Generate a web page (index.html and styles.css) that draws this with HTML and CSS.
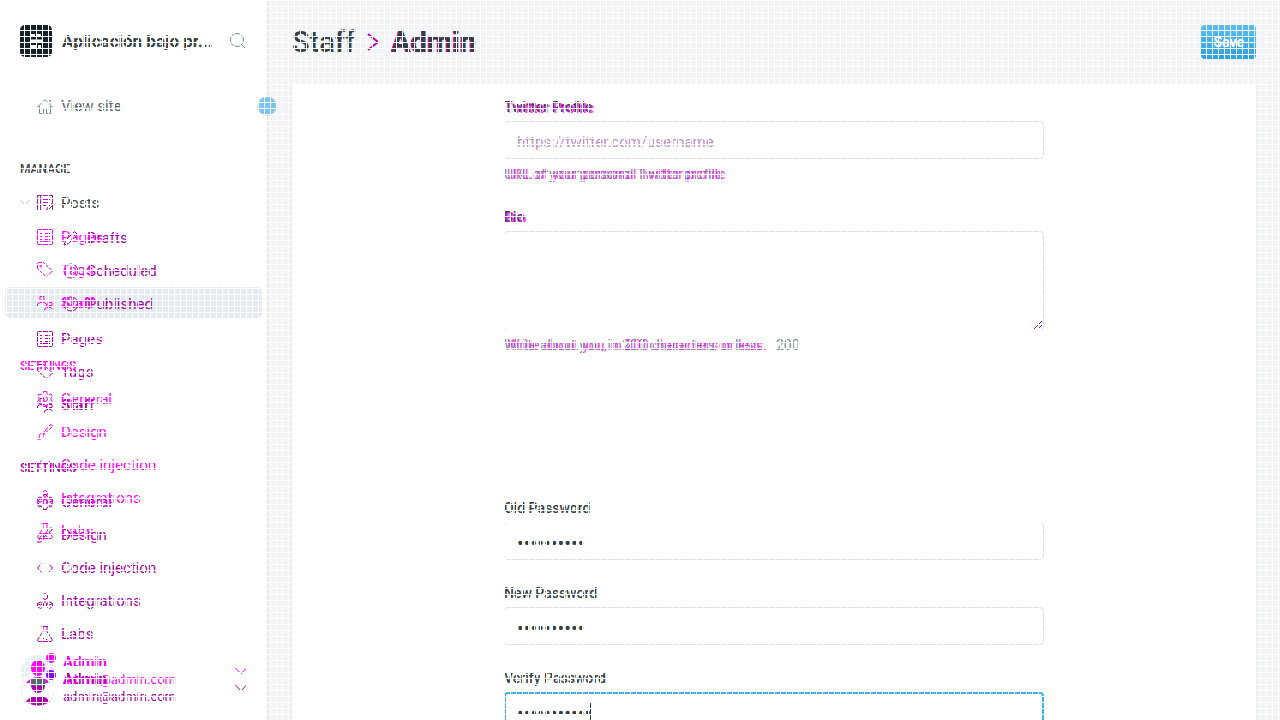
FILE: index.html
```html
<!DOCTYPE html>
<html lang="es">
<head>
<meta charset="utf-8">
<title>Staff - Admin</title>
<link rel="stylesheet" href="styles.css">
</head>
<body>
<svg class="defs" aria-hidden="true">
  <symbol id="home" viewBox="0 0 16 16"><path d="M.5 9 8 1.500 15.500 9M2.500 8v7.500h4v-5h3v5h4V8M11.500 2.500h2v3"/></symbol>
  <symbol id="posts" viewBox="0 0 16 16"><path d="M15.500 8V.5H.5v15h8M3.500.5v15M6 4.500h7M6 7.500h5M6 10.500h3M9.500 15.500l1-3 4-4 1.500 1.500-4 4z"/><path d="M.5.5h15v15H.5z"/></symbol>
  <symbol id="pages" viewBox="0 0 16 16"><rect x=".5" y=".5" width="15" height="15" rx="1"/><path d="M3 4.500h3M8 4.500h5M3 7.500h3M8 7.500h5M3 10.500h3M8 10.500h5M3 12.500h10"/></symbol>
  <symbol id="tag" viewBox="0 0 16 16"><path d="M.5 1.500v5l9 8.500 6-6-9-8.500h-5z"/><circle cx="4" cy="4" r="1"/></symbol>
  <symbol id="staff" viewBox="0 0 16 16"><path d="M3 1.500h4v4H3zM.5 11V9l2.500-1.500h4L9.500 9v3M11 7.500h4v3h-4zM7.500 15.500V14l2.500-1.500h3.500l2 1.500"/></symbol>
  <symbol id="pen" viewBox="0 0 16 16"><path d="m1 15 1.500-4.500 9-9 3 3-9 9zM9.500 3.500l3 3"/></symbol>
  <symbol id="clock" viewBox="0 0 16 16"><circle cx="8" cy="8" r="7"/><path d="M8 3.500V8l3 2"/></symbol>
  <symbol id="check" viewBox="0 0 16 16"><circle cx="8" cy="8" r="7"/><path d="m4.500 8 2.500 2.500 4.500-5"/></symbol>
  <symbol id="gear" viewBox="0 0 16 16"><circle cx="8" cy="8" r="2.500"/><path d="m6.500.5-.5 2-2 1-2-.5-1.500 2.500L2 7v2L.5 10.500 2 13l2-.5 2 1 .5 2h3l.5-2 2-1 2 .5 1.500-2.500L14 9V7l1.500-1.500L14 3l-2 .5-2-1-.5-2z"/></symbol>
  <symbol id="brush" viewBox="0 0 16 16"><path d="m6 9 7-8h2v2l-8 7zM6 9c-2-.5-3.500 1-3.500 3 0 1.500-1 3-2 3 3 1 6-1 6.500-5"/></symbol>
  <symbol id="code" viewBox="0 0 16 16"><path d="M4.500 3.500.5 8l4 4.500M11.500 3.500l4 4.500-4 4.500"/></symbol>
  <symbol id="blocks" viewBox="0 0 16 16"><path d="m8 .5 2.500 1.500v3L8 6.500 5.500 5V2zM3.500 9 6.500 10.500v3l-3 2-3-2v-3zM12.500 9l3 1.500v3l-3 2-3-2v-3zM8 6.500V10M.5 10.500l3 1.500 3-1.500M9.500 10.500l3 1.500 3-1.500"/></symbol>
  <symbol id="flask" viewBox="0 0 16 16"><path d="M4.500.5h7M6 .5v5l-5 7.500c-.8 1.500 0 2.500 1 2.500h12c1 0 1.800-1 1-2.500l-5-7.500v-5M3 10.500h10M6 12.500h1M9 13.500h1"/></symbol>
  <symbol id="down" viewBox="0 0 12 8"><path d="m.5 1 5.500 6L11.500 1"/></symbol>
</svg>

<div class="app">
  <aside class="sidebar">
    <header class="brand">
      <svg class="logo" viewBox="0 0 32 32" aria-hidden="true"><rect width="32" height="32" rx="5" fill="#15212a"/><path d="M10 10.500h5M16 10.500h5M10 16h12M10 21.500h6M18 21.500h3" stroke="#fff" stroke-width="3"/></svg>
      <span class="brand-name">Aplicación bajo pr...</span>
      <button class="plain" aria-label="Search"><svg class="icon" viewBox="0 0 16 16"><circle cx="7" cy="7" r="6.500"/><path d="m11.500 11.500 4 4"/></svg></button>
    </header>
    <nav class="nav">
      <a class="item view" href="#"><svg class="icon"><use href="#home"/></svg>View site</a>
      <h2 class="group first">Manage</h2>
      <a class="item" href="#"><svg class="twist"><use href="#down"/></svg><svg class="icon mixed"><use href="#posts"/></svg>Posts</a>
      <div class="sub">
        <a class="item changed" href="#"><svg class="icon"><use href="#pen"/></svg>Drafts</a>
        <a class="item changed" href="#"><svg class="icon"><use href="#clock"/></svg>Scheduled</a>
        <a class="item changed" href="#"><svg class="icon"><use href="#check"/></svg>Published</a>
      </div>
      <a class="item changed" href="#"><svg class="icon"><use href="#pages"/></svg>Pages</a>
      <a class="item changed" href="#"><svg class="icon"><use href="#tag"/></svg>Tags</a>
      <a class="item changed strong" href="#"><svg class="icon"><use href="#staff"/></svg>Staff</a>
      <h2 class="group changed">Settings</h2>
      <a class="item changed" href="#"><svg class="icon"><use href="#gear"/></svg>General</a>
      <a class="item changed" href="#"><svg class="icon"><use href="#brush"/></svg>Design</a>
      <a class="item changed" href="#"><svg class="icon"><use href="#code"/></svg>Code injection</a>
      <a class="item changed" href="#"><svg class="icon"><use href="#blocks"/></svg>Integrations</a>
      <a class="item changed" href="#"><svg class="icon"><use href="#flask"/></svg>Labs</a>
    </nav>
    <nav class="nav added" aria-label="Added">
      <a class="item" href="#"><svg class="icon"><use href="#pages"/></svg>Pages</a>
      <a class="item" href="#"><svg class="icon"><use href="#tag"/></svg>Tags</a>
      <a class="item strong active" href="#"><svg class="icon"><use href="#staff"/></svg>Staff</a>
      <h2 class="group">Settings</h2>
      <a class="item" href="#"><svg class="icon"><use href="#gear"/></svg>General</a>
      <a class="item" href="#"><svg class="icon"><use href="#brush"/></svg>Design</a>
      <a class="item" href="#"><svg class="icon"><use href="#code"/></svg>Code injection</a>
      <a class="item" href="#"><svg class="icon"><use href="#blocks"/></svg>Integrations</a>
      <a class="item" href="#"><svg class="icon"><use href="#flask"/></svg>Labs</a>
    </nav>
    <div class="account">
      <svg class="avatar" viewBox="0 0 38 54" aria-hidden="true"><circle cx="18" cy="19" r="17" fill="#e5eff5"/><circle cx="18" cy="36" r="16.500" fill="#fff" stroke="#e5eff5"/><path d="M1 36a17 17 0 0 1 34 0v-17H1z" fill="#e5eff5" clip-path="circle(17px at 17px 0px)"/><ellipse cx="18" cy="15" rx="7" ry="8" fill="#f0f"/><path d="M6 30q4-6 12-6t12 6z" fill="#f0f"/><ellipse cx="18" cy="32" rx="7" ry="8" fill="#b000b0"/><ellipse cx="18" cy="29" rx="8" ry="4" fill="#546a70"/><path d="M6 49q3-6 12-6t12 6q-12 7-24 0z" fill="#b000b0"/><circle cx="31" cy="5" r="5" fill="#f0f"/><circle cx="31" cy="22" r="5" fill="#9000ff"/></svg>
      <div class="people">
        <div class="person late"><strong>Admin</strong><span>admin@admin.com</span></div>
        <div class="person early"><strong>Admin</strong><span>admin@admin.com</span></div>
      </div>
      <div class="arrows"><svg class="arrow early"><use href="#down"/></svg><svg class="arrow"><use href="#down"/></svg></div>
    </div>
    <button class="handle" aria-label="Collapse menu"></button>
  </aside>

  <main class="main">
    <header class="top">
      <h1 class="title"><a href="#">Staff</a><svg class="sep" viewBox="0 0 12 18" aria-hidden="true"><path d="m1 1 10 8-10 8"/></svg><span class="name">Admin</span></h1>
      <button class="save">Save</button>
    </header>
    <section class="panel">
      <form class="form">
        <div class="field">
          <label class="double" data-text="Twitter Profile" for="twitter">Twitter Profile</label>
          <input id="twitter" placeholder="https://twitter.com/username">
          <p class="double" data-text="URL of your personal Twitter profile">URL of your personal Twitter profile</p>
        </div>
        <div class="field bio">
          <label class="double" data-text="Bio" for="bio">Bio</label>
          <div class="area"><textarea id="bio"></textarea><svg class="grip" viewBox="0 0 8 8" aria-hidden="true"><path d="M0 8l8-8M4 8l4-4"/></svg></div>
          <p class="count"><span class="double" data-text="Write about you, in 200 characters or less.">Write about you, in 200 characters or less.</span><span>200</span></p>
        </div>
        <div class="field"><label for="old">Old Password</label><input id="old" type="password" value="1234567890"></div>
        <div class="field"><label for="new">New Password</label><input id="new" type="password" value="1234567890"></div>
        <div class="field"><label for="verify">Verify Password</label><div class="area"><input id="verify" class="focused" type="password" value="12345678901"><i class="caret"></i></div></div>
      </form>
    </section>
  </main>
</div>
<div class="grid" aria-hidden="true"></div>
</body>
</html>
```

FILE: styles.css
```css
* { box-sizing: border-box; }
body { margin: 0; font: 15px/20px Roboto, sans-serif; color: #394047; background: #fff; }
h1, h2, p { margin: 0; }
a { color: inherit; text-decoration: none; }
.defs { position: absolute; width: 0; height: 0; }
.app { display: flex; height: 100vh; overflow: hidden; }
svg { fill: none; stroke: currentColor; flex: none; }
.logo, .avatar { stroke: none; }
.icon { width: 16px; height: 16px; color: #738a94; }
.changed, .changed .icon { color: #a800a8; }
.icon.mixed { color: #b018b8; }

.sidebar { position: relative; z-index: 1; flex: none; width: 267px; background: #fff; }
.brand { display: flex; align-items: center; gap: 10px; height: 82px; padding: 0 21px 0 20px; }
.logo { width: 32px; height: 32px; }
.brand-name { flex: 1; font-size: 17px; font-weight: 700; color: #343f44; white-space: nowrap; }
.plain { padding: 0; border: 0; background: none; line-height: 0; }
.nav { padding: 7px 5px 0; }
.item { position: relative; display: flex; align-items: center; gap: 8px; height: 33px; padding-left: 32px; }
.view { color: #566168; }
.twist { position: absolute; left: 15px; width: 10px; height: 7px; color: #b5babd; }
.strong { font-weight: 700; }
.group { margin: 41px 0 11px 15px; font-size: 12px; line-height: 12px; font-weight: 500; text-transform: uppercase; }
.sub { padding: 2px 0; }
.sub .item { padding-left: 58px; }
.added { position: absolute; top: 220px; left: 0; right: 0; padding-top: 0; color: #f0f; }
.added .icon { color: #f0f; }
.added .group { margin-bottom: 10px; }
.active::before { content: ""; position: absolute; inset: 1px 0; z-index: -1; border-radius: 5px; background: #e5eaf0; }
.account { position: absolute; left: 20px; right: 20px; top: 653px; display: flex; }
.avatar { width: 38px; height: 54px; }
.people { display: grid; flex: 1; margin-left: 5px; }
.person { grid-area: 1 / 1; display: flex; flex-direction: column; font-size: 15px; line-height: 18px; }
.person span { font-size: 13px; }
.early { color: #f0f; }
.late { padding-top: 17px; color: #a800a8; }
.arrows { display: flex; flex-direction: column; gap: 9px; padding-top: 14px; color: #a800a8; }
.arrow { width: 12px; height: 8px; }
.arrow.early { color: #f0f; }
.handle { position: absolute; top: 97px; right: -9px; width: 18px; height: 18px; padding: 0; border: 0; border-radius: 50%; background: #76c5f5; box-shadow: 0 0 0 1px #ccd0d3; }

.main { flex: 1; min-width: 0; display: flex; flex-direction: column; background: #f1f3f6; box-shadow: inset 3px 0 2px -2px #dfe2e6; }
.top { display: flex; flex: none; align-items: center; justify-content: space-between; height: 84px; padding: 0 24px 0 25px; }
.title { display: flex; align-items: center; font-size: 29px; line-height: 36px; font-weight: 500; color: #343f44; }
.sep { width: 12px; height: 18px; margin: 0 12px; color: #b800b8; stroke-width: 2; }
.name { font-weight: 700; text-shadow: -1px 0 #d000d0; }
.save { height: 34px; padding: 0 12px; border: 0; border-radius: 4px; background: linear-gradient(#5bbcf3, #2ba2e4); color: #fff; font: 700 14px/20px Roboto, sans-serif; }
.panel { flex: 1; min-height: 0; margin: 0 24px 0 25px; background: #fff; box-shadow: 0 0 3px #dfe2e6; clip-path: inset(0 -4px); }
.form { max-width: 540px; margin: 0 auto; padding-top: 13px; }
.field { margin-bottom: 23px; }
.field label, .field p { display: block; width: max-content; font-size: 14px; line-height: 20px; }
.field label { margin-bottom: 4px; font-weight: 500; color: #343f44; }
.field p { margin-top: 5px; color: #738a94; }
.double { position: relative; }
.double::after { content: attr(data-text); position: absolute; left: 3px; top: 0; color: #f0f; opacity: .8; white-space: nowrap; }
.field label.double::after { left: 2px; top: 1px; }
.field input, .field textarea { display: block; width: 100%; height: 38px; padding: 7px 12px 3px; border: 1px solid #d9e2e8; border-radius: 4px; background: #fff; color: #343f44; font: 15px/20px Roboto, sans-serif; outline: none; }
.field input[type="password"] { font-size: 20px; line-height: 24px; }
.field textarea { height: 100px; resize: none; }
.field ::placeholder { color: #bd8fc4; }
.bio { margin-bottom: 143px; }
.field .count { display: flex; gap: 12px; margin-top: 4px; }
.area { position: relative; }
.grip { position: absolute; right: 2px; bottom: 2px; width: 8px; height: 8px; color: #b800b8; }
.field .focused { padding: 6px 11px 2px; border: 2px solid #3eb0ef; }
.caret { position: absolute; left: 86px; top: 11px; width: 1px; height: 17px; background: #343f44; }

.grid { position: fixed; inset: 0; pointer-events: none; z-index: 5; background: repeating-linear-gradient(#fff 0 1px, transparent 1px 6px), repeating-linear-gradient(90deg, #fff 0 1px, transparent 1px 6px); }
```
